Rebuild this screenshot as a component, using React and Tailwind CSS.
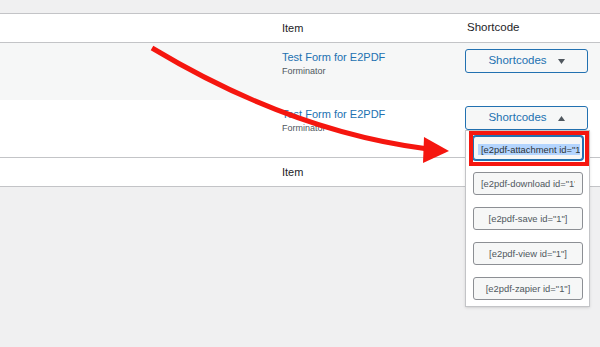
import React from 'react';

const items = [
  '[e2pdf-download id="1"]',
  '[e2pdf-save id="1"]',
  '[e2pdf-view id="1"]',
  '[e2pdf-zapier id="1"]',
];

const Caret = ({ up }) => (
  <svg width="7" height="5" viewBox="0 0 7 5" className="shrink-0">
    <path d={up ? 'M0 5 L3.5 0 L7 5 Z' : 'M0 0 L7 0 L3.5 5 Z'} fill="#50575e" />
  </svg>
);

const ShortcodeButton = ({ open }) => (
  <button className="w-[123px] h-[24px] flex items-center justify-center gap-[11px] border border-[#2271b1] rounded-[3px] bg-[#f6f7f7] text-[#2271b1] text-[11.5px] leading-none">
    <span>Shortcodes</span>
    <Caret up={open} />
  </button>
);

const Row = ({ bg, open }) => (
  <div className={`grid grid-cols-[282px_183px_1fr] h-[57px] ${bg}`}>
    <div />
    <div className="pt-[7px]">
      <div className="text-[11px] leading-[14px] text-[#2271b1]">Test Form for E2PDF</div>
      <div className="mt-[1px] text-[9px] leading-[12px] text-[#50575e]">Forminator</div>
    </div>
    <div className="relative pt-[6px]">
      <ShortcodeButton open={open} />
      {open && (
        <div className="absolute left-0 top-[30px] z-10 w-[125px] h-[177px] bg-white border border-[#c3c4c7] shadow-sm px-[7px] pt-[5px] flex flex-col gap-[12px]">
          <div className="w-[110px] h-[24px] shrink-0 flex items-center rounded-[3px] border border-[#2271b1] shadow-[0_0_0_1px_#2271b1] bg-[#f6f7f7] pl-[4px]">
            <div className="w-[102px] overflow-hidden">
              <span className="whitespace-nowrap bg-[#b4d5fe] px-[3px] text-[9.4px] leading-[15px] text-[#2c3338]">
                [e2pdf-attachment id="1"]
              </span>
            </div>
          </div>
          {items.map((t) => (
            <div
              key={t}
              className="w-[110px] h-[23px] shrink-0 px-[7px] rounded-[3px] border border-[#8c8f94] bg-[#f6f7f7]"
            >
              <div className="overflow-hidden whitespace-nowrap text-center text-[9.4px] leading-[21px] text-[#50575e]">
                {t}
              </div>
            </div>
          ))}
          {/* annotation box */}
          <div className="absolute left-[3px] top-0 w-[120px] h-[35px] border-[4px] border-[#f5160f]" />
        </div>
      )}
    </div>
  </div>
);

const HeadRow = () => (
  <div className="grid grid-cols-[282px_183px_1fr] h-[28px] items-center text-[#1d2327]">
    <div />
    <div className="text-[11px]">Item</div>
    <div className="pl-[2px] text-[11.5px]">Shortcode</div>
  </div>
);

export default function App() {
  return (
    <div
      className="relative w-[600px] h-[347px] overflow-hidden bg-[#f0f0f1]"
      style={{ fontFamily: '"Liberation Sans", Arial, sans-serif' }}
    >
      <div className="h-[13px]" />
      <div className="bg-white border-y border-[#c3c4c7]">
        <div className="border-b border-[#c3c4c7]">
          <HeadRow />
        </div>
        <Row bg="bg-[#f6f7f7]" />
        <Row bg="bg-white" open />
        <div className="border-t border-[#c3c4c7]">
          <HeadRow />
        </div>
      </div>

      <svg className="absolute inset-0 pointer-events-none z-20" width="600" height="347">
        <path d="M152 48 Q292 132 428 149" fill="none" stroke="#f5160f" strokeWidth="5" />
        <polygon points="424,137 423,163 449,151" fill="#f5160f" />
      </svg>
    </div>
  );
}
